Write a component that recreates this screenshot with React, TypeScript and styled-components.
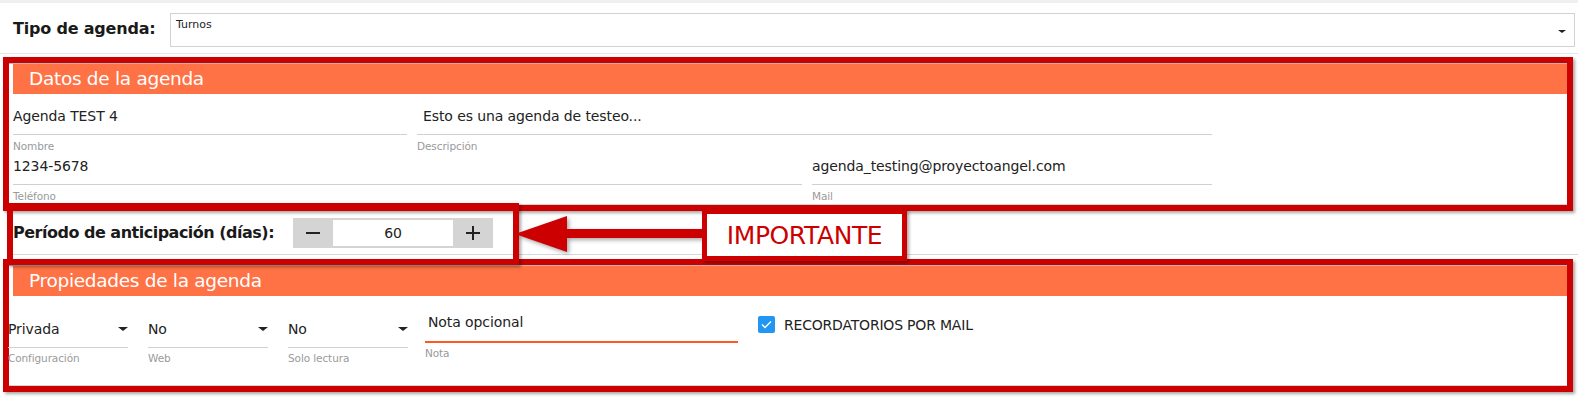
import React from "react";
import styled, { createGlobalStyle } from "styled-components";

const GlobalStyle = createGlobalStyle`
  html, body { margin: 0; padding: 0; background: #fff; }
  body { font-family: "DejaVu Sans", Verdana, sans-serif; color: #222; }
  * { box-sizing: border-box; }
`;

const RED = "#cc0000";
const ORANGE = "#ff7245";

const Page = styled.div`
  width: 1578px;
  height: 420px;
  border-top: 3px solid #efefef;
  overflow: hidden;
`;

const TypeRow = styled.div`
  display: flex;
  align-items: center;
  height: 51px;
  padding: 0 3px 0 13px;
  border-bottom: 1px solid #e4e4e4;
`;

const BoldLabel = styled.span<{ $w?: number; $ls?: number }>`
  font-weight: bold;
  font-size: 16px;
  letter-spacing: ${(p) => p.$ls ?? -0.3}px;
  color: #1a1a1a;
  width: ${(p) => (p.$w ? `${p.$w}px` : "auto")};
  flex: none;
`;

const Select = styled.div`
  flex: 1;
  height: 34px;
  margin-top: 3px;
  border: 1px solid #d2d2d2;
  display: flex;
  align-items: flex-start;
  justify-content: space-between;
  padding: 4px 8px 0 5px;
  font-size: 11px;
  color: #222;
`;

const Caret = styled.span<{ $size?: number; $top?: number }>`
  width: 0;
  height: 0;
  border-left: ${(p) => p.$size ?? 4}px solid transparent;
  border-right: ${(p) => p.$size ?? 4}px solid transparent;
  border-top: ${(p) => (p.$size ?? 4) - 0.5}px solid #222;
  margin-top: ${(p) => p.$top ?? 12}px;
  flex: none;
`;

const Frame = styled.div<{ $mt: number }>`
  margin: ${(p) => p.$mt}px 5px 0 3px;
  border: 6px solid ${RED};
  box-shadow: 2px 2px 3px rgba(0, 0, 0, 0.35);
`;

const Panel = styled.div<{ $pb: number }>`
  border-top: 1px solid #b8b8b8;
  border-bottom: 1px solid #d4d4d4;
  padding: 0 0 ${(p) => p.$pb}px 4px;
`;

const Header = styled.div`
  height: 30px;
  background: ${ORANGE};
  color: #fff;
  font-size: 18.5px;
  letter-spacing: -0.3px;
  line-height: 30px;
  padding-left: 16px;
`;

const FieldRow = styled.div<{ $mt: number }>`
  display: flex;
  gap: 10px;
  margin-top: ${(p) => p.$mt}px;
`;

const Field = styled.div<{ $w: number }>`
  width: ${(p) => p.$w}px;
  flex: none;
`;

const Value = styled.div<{ $h: number; $pt: number; $indent?: number; $accent?: boolean }>`
  height: ${(p) => p.$h}px;
  padding-top: ${(p) => p.$pt}px;
  padding-left: ${(p) => p.$indent ?? 0}px;
  border-bottom: ${(p) => (p.$accent ? `2px solid #ff5722` : `1px solid #d0d0d0`)};
  font-size: 14px;
  letter-spacing: -0.1px;
  line-height: 20px;
  color: #222;
  display: flex;
  justify-content: space-between;
  align-items: flex-start;
`;

const Label = styled.div<{ $mt?: number }>`
  margin-top: ${(p) => p.$mt ?? 5}px;
  font-size: 10.5px;
  letter-spacing: -0.1px;
  line-height: 13px;
  color: #9a9a9a;
`;

const PeriodWrap = styled.div`
  position: relative;
`;

const PeriodRow = styled.div`
  display: flex;
  align-items: center;
  height: 44px;
  margin-left: 10px;
  padding-left: 3px;
  border-bottom: 1px solid #d8d8d8;
`;

const Stepper = styled.div`
  display: flex;
  height: 30px;
  margin-left: 19px;
  background: #d4d4d4;
  padding: 2px 0;
`;

const StepButton = styled.div`
  width: 40px;
  display: flex;
  align-items: center;
  justify-content: center;
`;

const StepInput = styled.div`
  width: 120px;
  background: #fff;
  display: flex;
  align-items: center;
  justify-content: center;
  font-size: 14px;
  color: #222;
`;

const Annotation = styled.div`
  position: absolute;
  border: 6px solid ${RED};
  box-shadow: 2px 2px 3px rgba(0, 0, 0, 0.35);
`;

const PeriodBox = styled(Annotation)`
  left: 7px;
  top: -8px;
  width: 512px;
  height: 62px;
`;

const ImportantBox = styled(Annotation)`
  left: 702px;
  top: -2px;
  width: 205px;
  height: 52px;
  border-width: 5px;
  background: #fff;
  color: ${RED};
  font-size: 25px;
  letter-spacing: -0.4px;
  display: flex;
  align-items: center;
  justify-content: center;
`;

const Arrow = styled.svg`
  position: absolute;
  left: 514px;
  top: 4px;
  filter: drop-shadow(2px 2px 2px rgba(0, 0, 0, 0.35));
`;

const PropRow = styled.div`
  display: flex;
  align-items: flex-start;
  margin: 10px 0 0 -5px;
`;

const PropField = styled.div<{ $w: number; $mr: number }>`
  width: ${(p) => p.$w}px;
  margin-right: ${(p) => p.$mr}px;
  flex: none;
`;

const CheckItem = styled.div`
  display: flex;
  align-items: center;
  gap: 9px;
  margin-top: 10px;
  font-size: 14px;
  letter-spacing: -0.2px;
  color: #222;
`;

const CheckBox = styled.span`
  width: 17px;
  height: 17px;
  border-radius: 2px;
  background: #2196f3;
  display: flex;
  align-items: center;
  justify-content: center;
`;

export default function App() {
  return (
    <>
      <GlobalStyle />
      <Page>
        <TypeRow>
          <BoldLabel $w={157} $ls={-0.2}>Tipo de agenda:</BoldLabel>
          <Select>
            <span>Turnos</span>
            <Caret $size={4} $top={12} />
          </Select>
        </TypeRow>

        <Frame $mt={3}>
          <Panel $pb={1}>
            <Header>Datos de la agenda</Header>
            <FieldRow $mt={9}>
              <Field $w={394}>
                <Value $h={32} $pt={3}>Agenda TEST 4</Value>
                <Label>Nombre</Label>
              </Field>
              <Field $w={795}>
                <Value $h={32} $pt={3} $indent={6}>
                  Esto es una agenda de testeo...
                </Value>
                <Label>Descripción</Label>
              </Field>
            </FieldRow>
            <FieldRow $mt={0}>
              <Field $w={789}>
                <Value $h={32} $pt={3}>1234-5678</Value>
                <Label>Teléfono</Label>
              </Field>
              <Field $w={400}>
                <Value $h={32} $pt={3}>agenda_testing@proyectoangel.com</Value>
                <Label>Mail</Label>
              </Field>
            </FieldRow>
          </Panel>
        </Frame>

        <PeriodWrap>
          <PeriodRow>
            <BoldLabel $ls={-0.5}>Período de anticipación (días):</BoldLabel>
            <Stepper>
              <StepButton>
                <svg width="16" height="16" viewBox="0 0 16 16">
                  <rect x="1" y="7" width="14" height="2" fill="#222" />
                </svg>
              </StepButton>
              <StepInput>60</StepInput>
              <StepButton>
                <svg width="16" height="16" viewBox="0 0 16 16">
                  <rect x="1" y="7" width="14" height="2" fill="#222" />
                  <rect x="7" y="1" width="2" height="14" fill="#222" />
                </svg>
              </StepButton>
            </Stepper>
          </PeriodRow>
          <PeriodBox />
          <Arrow width="192" height="38" viewBox="0 0 192 38">
            <polygon points="1,19 53,1 53,37" fill={RED} />
            <rect x="52" y="14" width="140" height="9" fill={RED} />
          </Arrow>
          <ImportantBox>IMPORTANTE</ImportantBox>
        </PeriodWrap>

        <Frame $mt={4}>
          <Panel $pb={20}>
            <Header>Propiedades de la agenda</Header>
            <PropRow>
              <PropField $w={120} $mr={20}>
                <Value $h={42} $pt={13}>
                  <span>Privada</span>
                  <Caret $size={5} $top={8} />
                </Value>
                <Label $mt={4}>Configuración</Label>
              </PropField>
              <PropField $w={120} $mr={20}>
                <Value $h={42} $pt={13}>
                  <span>No</span>
                  <Caret $size={5} $top={8} />
                </Value>
                <Label $mt={4}>Web</Label>
              </PropField>
              <PropField $w={120} $mr={17}>
                <Value $h={42} $pt={13}>
                  <span>No</span>
                  <Caret $size={5} $top={8} />
                </Value>
                <Label $mt={4}>Solo lectura</Label>
              </PropField>
              <PropField $w={313} $mr={20}>
                <Value $h={37} $pt={6} $indent={3} $accent>
                  Nota opcional
                </Value>
                <Label $mt={4}>Nota</Label>
              </PropField>
              <CheckItem>
                <CheckBox>
                  <svg width="11" height="9" viewBox="0 0 11 9">
                    <path d="M1 4.5 L4 7.5 L10 1.5" stroke="#fff" strokeWidth="1.4" fill="none" />
                  </svg>
                </CheckBox>
                RECORDATORIOS POR MAIL
              </CheckItem>
            </PropRow>
          </Panel>
        </Frame>
      </Page>
    </>
  );
}
